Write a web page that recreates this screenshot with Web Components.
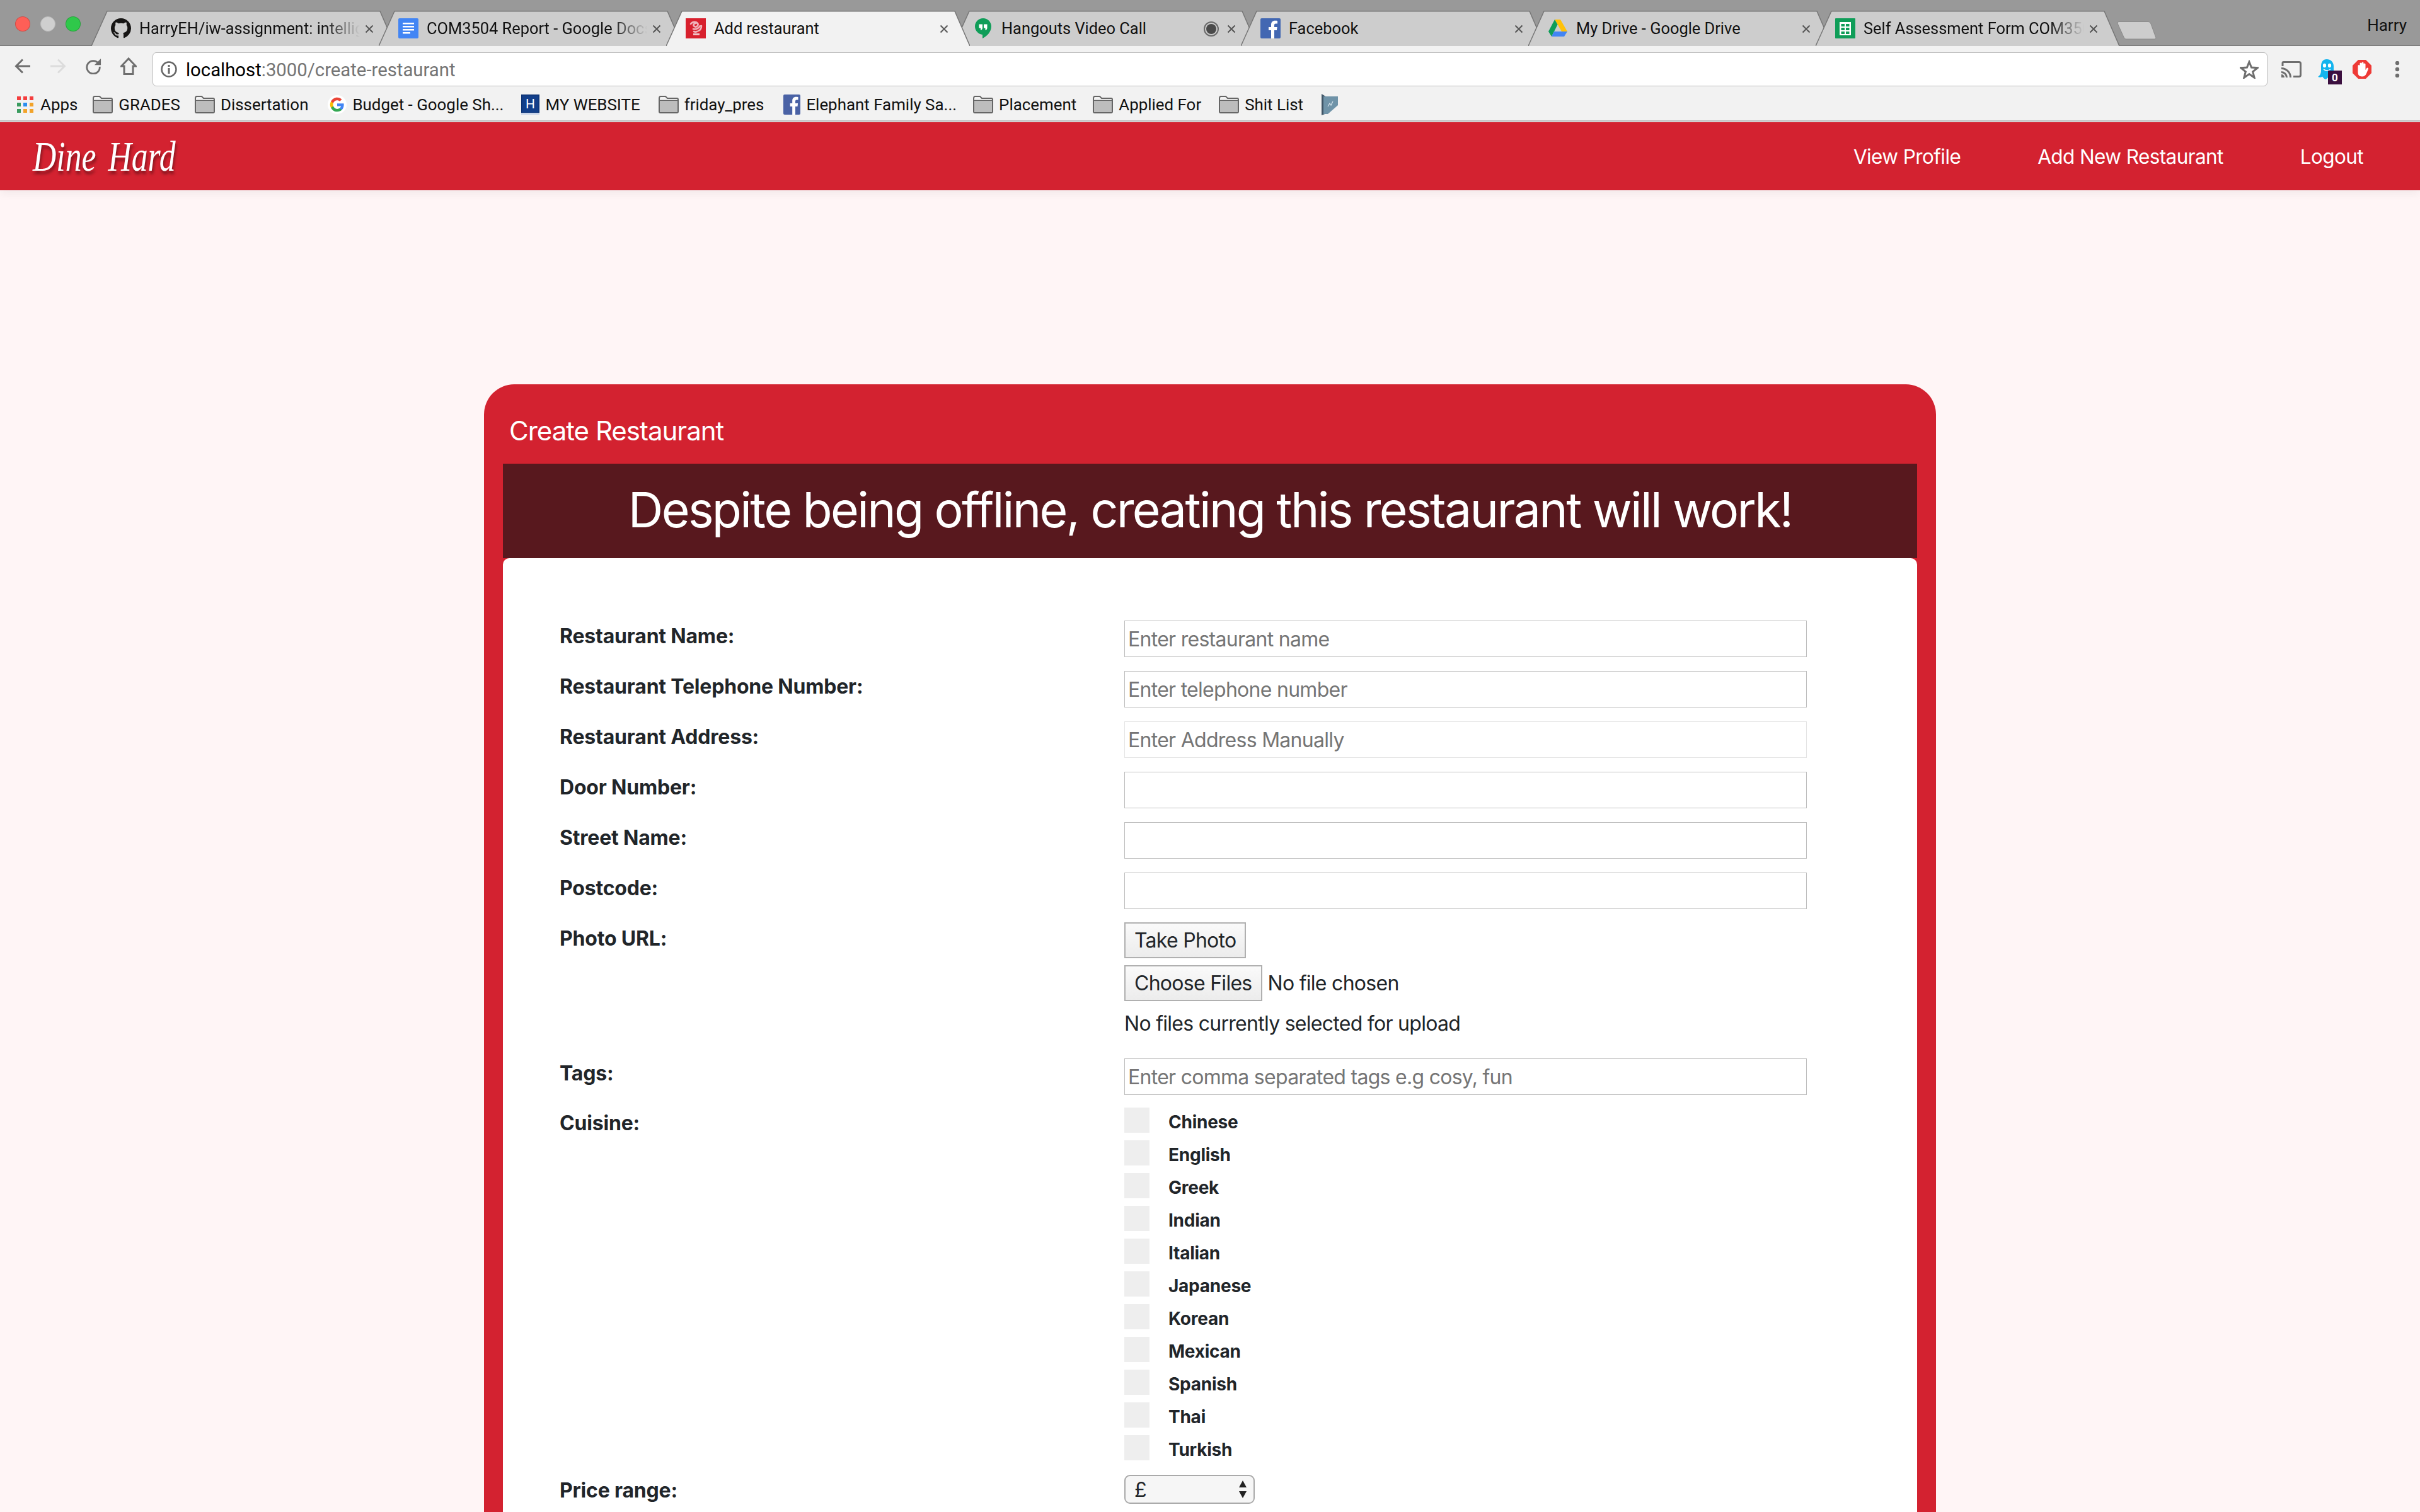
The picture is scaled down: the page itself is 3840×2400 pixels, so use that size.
<!DOCTYPE html>
<html><head><meta charset="utf-8"><title>Add restaurant</title>
<style>
html,body{margin:0;padding:0;height:2400px;overflow:hidden;background:#fff5f6;font-family:Inter,"Noto Sans",sans-serif}
body{display:flex;flex-direction:column}
</style></head><body>
<browser-chrome></browser-chrome>
<app-nav></app-nav>
<restaurant-card></restaurant-card>
<script>
const ICONS={
github:`<svg viewBox="0 0 16 16" width="32" height="32"><path fill="#161514" d="M8 0C3.58 0 0 3.58 0 8c0 3.54 2.29 6.53 5.47 7.59.4.07.55-.17.55-.38 0-.19-.01-.82-.01-1.49-2.01.37-2.53-.49-2.69-.94-.09-.23-.48-.94-.82-1.13-.28-.15-.68-.52-.01-.53.63-.01 1.08.58 1.23.82.72 1.21 1.87.87 2.33.66.07-.52.28-.87.51-1.07-1.78-.2-3.64-.89-3.64-3.95 0-.87.31-1.59.82-2.15-.08-.2-.36-1.02.08-2.12 0 0 .67-.21 2.2.82.64-.18 1.32-.27 2-.27s1.36.09 2 .27c1.53-1.04 2.2-.82 2.2-.82.44 1.1.16 1.92.08 2.12.51.56.82 1.27.82 2.15 0 3.07-1.87 3.75-3.65 3.95.29.25.54.73.54 1.48 0 1.07-.01 1.93-.01 2.2 0 .21.15.46.55.38A8.01 8.01 0 0 0 16 8c0-4.42-3.58-8-8-8z"/></svg>`,
docs:`<svg viewBox="0 0 32 32" width="32" height="32"><rect width="32" height="32" rx="2" fill="#4285f4"/><path fill="#fff" d="M7 7h18v2.500H7zM7 12h18v2.500H7zM7 17h18v2.500H7zM7 22h12v2.500H7z"/></svg>`,
rest:`<svg viewBox="0 0 32 32" width="32" height="32"><rect width="32" height="32" fill="#d8202d"/><g fill="none" stroke="#f0b4ba" stroke-width="2.600" stroke-linecap="round"><path d="M8 9c3-4 9-4 11-1s-2 7-5 5-1-5 2-5M12 17c3 1 8 0 11-5M25 12c0 4-2 7-5 8M13 21c2 1 3 1 5 0"/></g><rect x="12" y="24" width="10" height="3" fill="#f0c4c8"/></svg>`,
hangouts:`<svg viewBox="0 0 32 32" width="32" height="32"><path fill="#0f9d58" d="M16 0C8.800 0 3 5.800 3 13c0 6.800 5.700 12.500 12 13v6c7-3.500 14-10.500 14-19C29 5.800 23.200 0 16 0z"/><path fill="#fff" d="M9.500 9.500h5.500v5.500c0 2.200-1.200 3.600-3 4v-3.500H9.500zM17 9.500h5.500v5.500c0 2.200-1.200 3.600-3 4v-3.500H17z"/></svg>`,
fb:`<svg viewBox="0 0 32 32" width="32" height="32"><rect width="32" height="32" rx="2" fill="#4267b2"/><path fill="#fff" d="M22 32V19h4l.6-5H22v-3c0-1.500.5-2.500 2.500-2.500H27V4c-.5 0-2-.2-3.800-.2-3.800 0-6.200 2.300-6.200 6.300V14h-4v5h4v13z"/></svg>`,
drive:`<svg viewBox="0 0 32 32" width="32" height="32"><path fill="#ffc107" d="M11 2h9l11 19h-9z"/><path fill="#0f9d58" d="M11 2l4.600 8L6 29l-5-8z"/><path fill="#4285f4" d="M10 21h21l-5 8H6z"/></svg>`,
sheets:`<svg viewBox="0 0 32 32" width="32" height="32"><rect width="32" height="32" rx="1" fill="#0f9d58"/><path fill="#fff" d="M7 6h18v21H7z"/><path fill="#0f9d58" d="M9.500 9H15v4H9.500zM17 9h5.500v4H17zM9.500 15H15v4H9.500zM17 15h5.500v4H17zM9.500 21H15v4H9.500zM17 21h5.500v4H17z"/></svg>`,
folder:`<svg viewBox="0 0 32 28" width="32" height="28"><path d="M1 4.500Q1 1 3 1h8l3 3h15q2 0 2 2v19q0 2-2 2H3q-2 0-2-2z" fill="#f2f2f2" stroke="#666" stroke-width="2"/><path d="M2 8.500h28V26H2z" fill="#bdbdbd"/><path d="M1 7.500h30" stroke="#666" stroke-width="1.500"/></svg>`,
apps:`<svg viewBox="0 0 26 26" width="26" height="26"><rect x="0" y="0" width="6" height="6" fill="#f43e3e"/><rect x="10" y="0" width="6" height="6" fill="#f43e3e"/><rect x="20" y="0" width="6" height="6" fill="#f43e3e"/><rect x="0" y="10" width="6" height="6" fill="#3a9c5f"/><rect x="10" y="10" width="6" height="6" fill="#2a8ef0"/><rect x="20" y="10" width="6" height="6" fill="#f2a32a"/><rect x="0" y="20" width="6" height="6" fill="#3a9c5f"/><rect x="10" y="20" width="6" height="6" fill="#f2a32a"/><rect x="20" y="20" width="6" height="6" fill="#f2a32a"/></svg>`,
google:`<svg viewBox="0 0 48 48" width="30" height="30"><circle cx="24" cy="24" r="24" fill="#fff"/><path fill="#4285f4" d="M41 24.500c0-1.300-.1-2.500-.3-3.500H24v7h9.600c-.4 2.200-1.700 4-3.500 5.300v4.400h5.700C39.100 34.600 41 30 41 24.500z"/><path fill="#34a853" d="M24 42c4.700 0 8.700-1.600 11.800-4.300l-5.700-4.400c-1.600 1.100-3.600 1.700-6.100 1.700-4.600 0-8.500-3.100-9.900-7.300H8.200v4.500C11.200 38 17.100 42 24 42z"/><path fill="#fbbc05" d="M14.100 27.700c-.4-1.100-.6-2.300-.6-3.700s.2-2.600.6-3.700v-4.500H8.200C7 18.200 6 21 6 24s1 5.800 2.200 8.200z"/><path fill="#ea4335" d="M24 13c2.600 0 5 .9 6.800 2.700l5.100-5.100C32.700 7.600 28.700 6 24 6 17.100 6 11.200 10 8.200 15.800l5.900 4.500C15.500 16.100 19.400 13 24 13z"/></svg>`,
hsite:`<svg viewBox="0 0 29 32" width="29" height="32"><rect width="29" height="32" fill="#0c3272"/><rect x="1.500" y="1.500" width="26" height="27" fill="#123f8a"/><rect y="29" width="29" height="3" fill="#c9d4e8"/><text x="14.500" y="22" text-anchor="middle" font-family="Roboto" font-size="21" fill="#fff">H</text></svg>`,
fbm:`<svg viewBox="0 0 27 32" width="27" height="32"><rect width="27" height="32" rx="2" fill="#4a62a5"/><path fill="#fff" d="M19 32V19h3.500l.6-5H19v-3c0-1.500.5-2.500 2-2.500h2.500V4c-.5 0-2-.2-3.500-.2-3.500 0-5.800 2.200-5.800 6V14h-3.500v5h3.500v13z"/></svg>`,
ext:`<svg viewBox="0 0 26 34" width="26" height="34"><path fill="#3f5566" d="M0 0l8 5v26l-8 3z"/><path fill="#6f93a8" d="M3 4h23v14L10 32H3z"/><path fill="none" stroke="#d9e6ee" stroke-width="1.200" d="M10 20l3-5 2 3 3-6"/></svg>`
};
function def(name,html,setup){customElements.define(name,class extends HTMLElement{
  connectedCallback(){if(this.shadowRoot)return;const r=this.attachShadow({mode:'open'});r.innerHTML=typeof html==='function'?html(this):html;if(setup)setup(this,r)}
})}

def('browser-tab',el=>{const a=el.hasAttribute('active');const fill=a?'#f2f2f2':'#cdcdcd';
return `<style>
:host{display:block;position:relative;width:482px;height:56px;margin-right:-26px;z-index:${a?5:1};font:25.400px Roboto,"Liberation Sans",sans-serif;color:#111}
svg.bg{position:absolute;left:0;top:0;width:100%;height:100%}
.in{position:relative;display:flex;align-items:center;height:100%;padding-left:31px;box-sizing:border-box}
.ic{width:32px;height:32px;flex:none;display:flex;margin-right:13px}
.tx{width:${el.getAttribute('tw')||350}px;white-space:nowrap;overflow:hidden;flex:none;${el.hasAttribute('fade')?'-webkit-mask-image:linear-gradient(90deg,#000 84%,transparent 100%);':''}}
.rec{position:absolute;left:397px;top:17px}
.x{position:absolute;left:434px;top:22px}
</style>
<svg class="bg" viewBox="0 0 482 56" preserveAspectRatio="none"><path d="M0 56L25 0H458L482 56Z" fill="${fill}"/><path d="M0 56L25 .7H458L482 56" fill="none" stroke="#777" stroke-width="1.500"/></svg>
<div class="in"><span class="ic">${ICONS[el.getAttribute('icon')]}</span><span class="tx"><slot></slot></span></div>
${el.hasAttribute('rec')?'<svg class="rec" width="24" height="24" viewBox="0 0 24 24"><circle cx="12" cy="12" r="11" fill="none" stroke="#6a6a6a" stroke-width="2"/><circle cx="12" cy="12" r="8" fill="#4a4a4a"/></svg>':''}
<svg class="x" width="14" height="14" viewBox="0 0 14 14"><path d="M1.500 1.500l11 11M12.500 1.500l-11 11" stroke="#555" stroke-width="2"/></svg>`});

def('book-mark',el=>`<style>
:host{display:flex;align-items:center;gap:9px;height:40px;font:25.900px Roboto,"Liberation Sans",sans-serif;color:#111;white-space:nowrap}
.i{display:flex;align-items:center}
</style><span class="i">${ICONS[el.getAttribute('icon')]}</span><slot></slot>`);

def('browser-chrome',`<style>
:host{display:block;flex:none;height:194px}
.strip{height:73px;background:#999;position:relative;box-sizing:border-box;border-bottom:1.500px solid #777;display:flex;align-items:flex-end}
.lights{display:flex;gap:16px;padding:0 0 0 24px;width:145px;box-sizing:border-box;align-self:flex-start;margin-top:26px;flex:none}
.lights i{width:24px;height:24px;flex:none;border-radius:50%;box-sizing:border-box;border:1px solid rgba(0,0,0,.18)}
.tabs{display:flex;height:56px;margin-bottom:-1px}
.new{position:absolute;left:3359px;top:33px}
.user{position:absolute;right:21px;top:25px;font:26px Roboto,sans-serif;color:#111}
.tool{height:64px;background:#f2f2f2;display:flex;align-items:center;box-sizing:border-box;padding:0}
.nav{display:flex;align-items:center;width:242px;padding-left:23px;gap:30px;box-sizing:border-box;flex:none}
.url{width:3356px;flex:none;height:54px;box-sizing:border-box;background:#fff;border:1.500px solid #bbb;border-radius:6px;display:flex;align-items:center;font:29.300px Roboto,sans-serif;color:#757575;padding:0 13px 0 12px;margin-top:9px}
.url b{font-weight:400;color:#000}
.url svg{flex:none}
.url span{margin-left:14px;flex:1;position:relative;top:1px}
.bm{height:56px;box-sizing:border-box;background:#f2f2f2;border-bottom:2px solid #bbb;display:flex;align-items:center;gap:26px;padding:3px 0 0 27px}
.ex{display:flex;align-items:center;height:54px;margin-top:9px;padding-left:22px}
.ex span{position:relative;display:flex}
.badge{position:absolute;left:16px;top:18px;width:22px;height:22px;background:#3b0f3f;color:#fff;font:bold 17px Roboto,sans-serif;font-style:normal;display:flex;align-items:center;justify-content:center}
</style>
<div class="strip">
 <div class="lights"><i style="background:#fe5f57"></i><i style="background:#cfcfcf;border-color:#bdbdbd"></i><i style="background:#2fc84a"></i></div>
 <div class="tabs">
  <browser-tab icon="github" fade>HarryEH/iw-assignment: intelligent web</browser-tab>
  <browser-tab icon="docs" fade>COM3504 Report - Google Docs</browser-tab>
  <browser-tab icon="rest" active>Add restaurant</browser-tab>
  <browser-tab icon="hangouts" tw="300" rec>Hangouts Video Call</browser-tab>
  <browser-tab icon="fb">Facebook</browser-tab>
  <browser-tab icon="drive">My Drive - Google Drive</browser-tab>
  <browser-tab icon="sheets" fade>Self Assessment Form COM3504</browser-tab>
 </div>
 <svg class="new" width="63" height="30" viewBox="0 0 63 30"><path d="M3 1.500H50Q53 1.500 54 5L62 27Q62 29 60 29H14Q12 29 11 26L1 4Q1 1.500 3 1.500Z" fill="#cdcdcd" stroke="#8a8a8a"/></svg>
 <div class="user">Harry</div>
</div>
<div class="tool">
 <div class="nav">
  <svg width="26" height="26" viewBox="0 0 26 26"><path d="M25 13H3M13 2.500L2.500 13 13 23.500" fill="none" stroke="#6e6e6e" stroke-width="3"/></svg>
  <svg width="26" height="26" viewBox="0 0 26 26"><path d="M1 13h22M13 2.500L23.500 13 13 23.500" fill="none" stroke="#dcdcdc" stroke-width="3"/></svg>
  <svg width="26" height="26" viewBox="0 0 28 28"><path d="M23 9.500A11 11 0 1 0 25 15" fill="none" stroke="#6e6e6e" stroke-width="3"/><path d="M27 1v11H16z" fill="#6e6e6e"/></svg>
  <svg width="26" height="28" viewBox="0 0 26 28"><path d="M13 2L1.500 14H6v12.500h14V14h4.500z" fill="none" stroke="#6e6e6e" stroke-width="3"/></svg>
 </div>
 <div class="url">
  <svg width="26" height="26" viewBox="0 0 26 26"><circle cx="13" cy="13" r="11.500" fill="none" stroke="#666" stroke-width="2.500"/><path d="M11.500 6h3v3h-3zM11.500 11h3v9h-3z" fill="#666"/></svg>
  <span><b>localhost</b>:3000/create-restaurant</span>
  <svg width="30" height="30" viewBox="0 0 28 28"><path d="M14 3l3.300 8.300 9 .6-7 5.700 2.300 8.800L14 21l-7.600 5.400 2.300-8.800-7-5.700 9-.6z" fill="none" stroke="#6e6e6e" stroke-width="2.800"/></svg>
 </div>
 <div class="ex">
  <span><svg width="32" height="26" viewBox="0 0 32 26"><path d="M2 8V3Q2 1.500 3.500 1.500H28Q30.500 1.500 30.500 4V22Q30.500 24.500 28 24.500H19" fill="none" stroke="#6e6e6e" stroke-width="3"/><path d="M0 10a16 16 0 0 1 16 16h-3A13 13 0 0 0 0 13zM0 16a10 10 0 0 1 10 10H7a7 7 0 0 0-7-7zM0 21a5 5 0 0 1 5 5H0z" fill="#6e6e6e"/></svg></span>
  <span style="margin-left:26px"><svg width="26" height="32" viewBox="0 0 26 32"><path d="M14 0C8 0 5 4.500 5 11v7c0 5-2 8-5 10 3 1 5 1 7-.5 1.500 2 3 3.500 5 4.500 2-1 4-2.500 6-5 2.500 1 5 .5 7-1.500V11C25 4.500 20 0 14 0z" fill="#14b4ee"/><ellipse cx="10.500" cy="10" rx="2.600" ry="3.200" fill="#fff"/><ellipse cx="18.500" cy="10" rx="2.600" ry="3.200" fill="#fff"/><path d="M9 16q5 4 11 0" fill="none" stroke="#fff" stroke-width="1.500"/></svg><i class="badge">0</i></span>
  <span style="margin-left:29px"><svg width="30" height="30" viewBox="0 0 30 30"><path d="M9 0h12l9 9v12l-9 9H9l-9-9V9z" fill="#ee3a36"/><path d="M8.500 18V9.500a1.500 1.500 0 0 1 3 0V6a1.500 1.500 0 0 1 3 0v-1a1.500 1.500 0 0 1 3 0v2a1.500 1.500 0 0 1 3 0v9l2-3a1.500 1.500 0 0 1 2.500 1.500l-3 7q-2 5-7 5-6.500 0-6.500-6.500z" fill="#fff"/></svg></span>
  <span style="margin-left:37px"><svg width="8" height="26" viewBox="0 0 8 26"><circle cx="4" cy="3" r="3.200" fill="#6e6e6e"/><circle cx="4" cy="13" r="3.200" fill="#6e6e6e"/><circle cx="4" cy="23" r="3.200" fill="#6e6e6e"/></svg></span>
 </div>
</div>
<div class="bm">
 <book-mark icon="apps" style="gap:11px">Apps</book-mark>
 <book-mark icon="folder" style="margin-left:-2px">GRADES</book-mark>
 <book-mark icon="folder" style="margin-left:-3px">Dissertation</book-mark>
 <book-mark icon="google" style="margin-left:5px">Budget - Google Sh...</book-mark>
 <book-mark icon="hsite" style="margin-left:2px">MY WEBSITE</book-mark>
 <book-mark icon="folder" style="margin-left:3px">friday_pres</book-mark>
 <book-mark icon="fbm" style="margin-left:5px">Elephant Family Sa...</book-mark>
 <book-mark icon="folder">Placement</book-mark>
 <book-mark icon="folder">Applied For</book-mark>
 <book-mark icon="folder" style="margin-left:2px">Shit List</book-mark>
 <book-mark icon="ext" style="margin-left:3px"></book-mark>
</div>`);

def('app-nav',`<style>
:host{display:flex;flex:none;align-items:center;height:108px;background:#d32230;box-shadow:0 6px 14px rgba(0,0,0,.05);position:relative;z-index:2;color:#fff;padding:0 90px 0 52px;box-sizing:border-box}
.logo{font:italic 400 68px "Liberation Serif",serif;word-spacing:8px;text-shadow:2px 5px 5px rgba(0,0,0,.4);display:inline-block;width:232px;white-space:nowrap;flex:none;transform:scaleX(.76);transform-origin:left center}
.links{margin-left:auto;display:flex;gap:122px;font-size:31.500px;letter-spacing:-.6px}
</style><div class="logo">Dine Hard</div><div class="links"><span>View Profile</span><span>Add New Restaurant</span><span>Logout</span></div>`);

def('form-row',el=>`<style>
:host{display:grid;grid-template-columns:896px 1083px;margin-bottom:${el.getAttribute('mb')||22}px}
.l{font-weight:700;font-size:32px;letter-spacing:-.19px;color:#212529;line-height:48px;padding-top:${el.getAttribute('lt')||1}px}
</style><div class="l">${el.getAttribute('label')}</div><div><slot></slot></div>`);

def('text-field',el=>`<style>
:host{display:block;height:58px;box-sizing:border-box;border:1.500px solid ${el.hasAttribute('light')?'#e4e4e4':'#bdbdbd'};background:#fff;font-size:32px;letter-spacing:-.72px;color:#757575;padding-left:5px;line-height:58px;white-space:nowrap}
</style><slot></slot>`);

def('native-button',`<style>
:host{display:inline-block;box-sizing:border-box;height:58px;line-height:54px;padding:0 14px;border:2px solid #b0b0b0;background:linear-gradient(#fafafa,#ececec);font-size:32px;letter-spacing:-.72px;color:#212529;white-space:nowrap}
</style><slot></slot>`);

def('cuisine-box',`<style>
:host{display:flex;align-items:center;height:40px;margin-bottom:12px;font-weight:700;font-size:28px;letter-spacing:-.25px;color:#212529}
i{width:40px;height:40px;background:#eee;flex:none;margin-right:30px}
span{position:relative;top:3px}
</style><i></i><span><slot></slot></span>`);

def('price-select',`<style>
:host{display:flex;align-items:center;justify-content:space-between;box-sizing:border-box;width:207px;height:46px;border:2px solid #aaa;border-radius:9px;background:#f6f6f6;padding:0 10px 0 14px;font-size:32px;color:#212529}
svg{flex:none}
</style><slot></slot><svg width="14" height="32" viewBox="0 0 14 32"><path d="M7 2l6 11H1zM7 30l6-11H1z" fill="#222"/></svg>`);

def('restaurant-card',`<style>
:host{display:block;box-sizing:border-box;width:2304px;margin:308px 0 0 768px;background:#d32230;border-radius:48px 48px 0 0;padding:0 30px;flex:none;color:#212529}
.h{color:#fff;font-size:42px;letter-spacing:-1px;height:126px;line-height:148px;padding-left:10px}
.banner{height:150px;box-sizing:border-box;padding-bottom:5px;background:#58181e;color:#fff;font-size:77px;letter-spacing:-2.650px;display:flex;align-items:center;justify-content:center;white-space:nowrap}
.body{background:#fff;border-radius:10px 10px 0 0;padding:99px 0 200px 90px}
.stack{display:flex;flex-direction:column;align-items:flex-start;margin-top:-1px}
.stack native-button{height:57px;margin-bottom:11px}
.file{display:flex;align-items:center;gap:9px;font-size:32px;letter-spacing:-.72px}
.none{font-size:32px;letter-spacing:-.72px;line-height:48px;margin-top:12px}
</style>
<div class="h">Create Restaurant</div>
<div class="banner">Despite being offline, creating this restaurant will work!</div>
<div class="body">
 <form-row label="Restaurant Name:"><text-field>Enter restaurant name</text-field></form-row>
 <form-row label="Restaurant Telephone Number:"><text-field>Enter telephone number</text-field></form-row>
 <form-row label="Restaurant Address:"><text-field light>Enter Address Manually</text-field></form-row>
 <form-row label="Door Number:"><text-field></text-field></form-row>
 <form-row label="Street Name:"><text-field></text-field></form-row>
 <form-row label="Postcode:"><text-field></text-field></form-row>
 <form-row label="Photo URL:" mb="31"><div class="stack"><native-button>Take Photo</native-button><div class="file"><native-button style="margin:0">Choose Files</native-button><span>No file chosen</span></div><div class="none">No files currently selected for upload</div></div></form-row>
 <form-row label="Tags:" mb="20" lt="0.01"><text-field>Enter comma separated tags e.g cosy, fun</text-field></form-row>
 <form-row label="Cuisine:" mb="11" lt="1"><div>
  <cuisine-box>Chinese</cuisine-box><cuisine-box>English</cuisine-box><cuisine-box>Greek</cuisine-box><cuisine-box>Indian</cuisine-box><cuisine-box>Italian</cuisine-box><cuisine-box>Japanese</cuisine-box><cuisine-box>Korean</cuisine-box><cuisine-box>Mexican</cuisine-box><cuisine-box>Spanish</cuisine-box><cuisine-box>Thai</cuisine-box><cuisine-box>Turkish</cuisine-box>
 </div></form-row>
 <form-row label="Price range:"><price-select>£</price-select></form-row>
</div>`);
</script>
</body></html>
